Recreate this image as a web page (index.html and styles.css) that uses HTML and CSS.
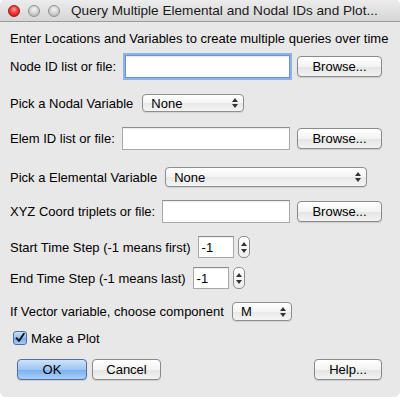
FILE: index.html
```html
<!DOCTYPE html>
<html>
<head>
<meta charset="utf-8">
<link rel="stylesheet" href="styles.css">
</head>
<body>
<div class="window">
  <div class="titlebar">
    <div class="lights">
      <span class="light red"></span>
      <span class="light gray"></span>
      <span class="light gray"></span>
    </div>
    <div class="title">Query Multiple Elemental and Nodal IDs and Plot...</div>
  </div>
  <div class="content">
    <div class="row intro">Enter Locations and Variables to create multiple queries over time</div>

    <div class="row r-node">
      <span class="label">Node ID list or file:</span>
      <span class="field focus grow"></span>
      <span class="btn browse">Browse...</span>
    </div>

    <div class="row r-nvar">
      <span class="label">Pick a Nodal Variable</span>
      <span class="select sel-nodal"><span class="sel-text">None</span><span class="arrows"><i class="up"></i><i class="down"></i></span></span>
    </div>

    <div class="row r-elem">
      <span class="label">Elem ID list or file:</span>
      <span class="field grow"></span>
      <span class="btn browse">Browse...</span>
    </div>

    <div class="row r-evar">
      <span class="label">Pick a Elemental Variable</span>
      <span class="select sel-elem"><span class="sel-text">None</span><span class="arrows"><i class="up"></i><i class="down"></i></span></span>
    </div>

    <div class="row r-xyz">
      <span class="label">XYZ Coord triplets or file:</span>
      <span class="field grow"></span>
      <span class="btn browse">Browse...</span>
    </div>

    <div class="row r-start">
      <span class="label">Start Time Step (-1 means first)</span>
      <span class="field num">-1</span>
      <span class="stepper"><i class="up"></i><i class="down"></i></span>
    </div>

    <div class="row r-end">
      <span class="label">End Time Step (-1 means last)</span>
      <span class="field num">-1</span>
      <span class="stepper"><i class="up"></i><i class="down"></i></span>
    </div>

    <div class="row r-vec">
      <span class="label">If Vector variable, choose component</span>
      <span class="select sel-vec"><span class="sel-text">M</span><span class="arrows"><i class="up"></i><i class="down"></i></span></span>
    </div>

    <div class="row r-check">
      <span class="checkbox">
        <svg width="14" height="14" viewBox="0 0 14 14"><path d="M3 7.2 L5.8 10.5 L11.5 2" fill="none" stroke="#111" stroke-width="2.2" stroke-linecap="round" stroke-linejoin="round"/></svg>
      </span>
      <span class="check-label">Make a Plot</span>
    </div>

    <div class="row r-buttons">
      <span class="btn default">OK</span>
      <span class="btn cancel">Cancel</span>
      <span class="spacer"></span>
      <span class="btn help">Help...</span>
    </div>
  </div>
</div>
</body>
</html>
```

FILE: styles.css
```css
* { box-sizing: border-box; }
html, body { margin: 0; padding: 0; background: #ffffff; }
body {
  width: 400px;
  height: 397px;
  font-family: "Liberation Sans", Arial, sans-serif;
  font-size: 13px;
  color: #000;
  overflow: hidden;
}
.window {
  width: 400px;
  height: 397px;
  background: #e8e8e8;
  border-radius: 5px 5px 6px 6px;
  overflow: hidden;
  display: flex;
  flex-direction: column;
}
.titlebar {
  height: 22px;
  flex: none;
  display: flex;
  align-items: center;
  background: linear-gradient(#ececec, #d6d6d6);
  border-bottom: 1px solid #9c9c9c;
  padding-left: 8px;
}
.lights { display: flex; gap: 8px; }
.light {
  width: 12px; height: 12px; border-radius: 50%;
  display: block;
}
.light.red {
  background: radial-gradient(circle at 50% 35%, #ff9a9a 0%, #f23a3a 45%, #b81414 100%);
  border: 1px solid #a31616;
}
.light.gray {
  background: radial-gradient(circle at 50% 35%, #f4f4f4 0%, #cfcfcf 55%, #a6a6a6 100%);
  border: 1px solid #8f8f8f;
}
.title {
  margin-left: 11px;
  font-size: 13.6px;
  color: #1a1a1a;
  white-space: nowrap;
}
.content {
  flex: 1;
  display: flex;
  flex-direction: column;
  padding: 8px 18px 0 10px;
}
.row {
  display: flex;
  align-items: center;
  white-space: nowrap;
}
.intro { height: 16px; }
.r-node { height: 25px; margin-top: 8px; }
.r-nvar { height: 18px; margin-top: 15px; }
.r-elem { height: 25px; margin-top: 14px; }
.r-evar { height: 20px; margin-top: 16px; }
.r-xyz { height: 25px; margin-top: 12px; }
.r-start { height: 22px; margin-top: 12px; }
.r-end { height: 22px; margin-top: 9px; }
.r-vec { height: 19px; margin-top: 13px; }
.r-check { height: 14px; margin-top: 10px; padding-left: 3px; }
.r-buttons { height: 22px; margin-top: 13px; padding-left: 7px; }

.label { margin-right: 7px; }
.field {
  height: 23px;
  background: #fff;
  border: 1px solid #a9a9a9;
  border-top-color: #8c8c8c;
  box-shadow: inset 0 1px 1px rgba(0,0,0,0.08);
  display: flex;
  align-items: center;
  padding-left: 3px;
}
.field.grow { flex: 1; }
.field.focus {
  border: 1px solid #6d95c9;
  box-shadow: 0 0 0 2px #8db2e3, inset 0 1px 1px rgba(0,0,0,0.1);
  margin-left: 2px;
}
.field.num { width: 36px; height: 22px; }

.btn {
  display: flex;
  align-items: center;
  justify-content: center;
  height: 21px;
  border: 1px solid #8a8a8a;
  border-radius: 4px;
  background: linear-gradient(#ffffff 0%, #f3f3f3 50%, #e4e4e4 51%, #f2f2f2 100%);
  box-shadow: 0 1px 1px rgba(0,0,0,0.12);
}
.browse { width: 85px; margin-left: 7px; }
.default {
  width: 70px;
  border-color: #4e6f9f;
  background: linear-gradient(#cfe3fb 0%, #9ec5f3 50%, #7aaeef 51%, #a9d0fa 100%);
}
.cancel { width: 69px; margin-left: 5px; }
.spacer { flex: 1; }
.help { width: 68px; }

.select {
  display: flex;
  align-items: center;
  border: 1px solid #8e8e8e;
  border-radius: 4px;
  background: linear-gradient(#ffffff 0%, #f4f4f4 50%, #e8e8e8 51%, #f5f5f5 100%);
  box-shadow: 0 1px 1px rgba(0,0,0,0.1);
  padding-left: 8px;
  padding-right: 5px;
}
.sel-text { flex: 1; }
.sel-nodal { width: 102px; height: 18px; margin-left: 2px; }
.sel-elem { width: 202px; height: 20px; margin-left: 1px; }
.sel-vec { width: 60px; height: 19px; margin-left: 1px; }
.arrows, .stepper {
  display: flex;
  flex-direction: column;
  align-items: center;
  gap: 2px;
}
.arrows i, .stepper i {
  display: block;
  width: 0; height: 0;
  border-left: 3px solid transparent;
  border-right: 3px solid transparent;
}
.arrows i.up, .stepper i.up { border-bottom: 4px solid #333; }
.arrows i.down, .stepper i.down { border-top: 4px solid #333; }
.stepper {
  width: 12px;
  height: 22px;
  margin-left: 4px;
  justify-content: center;
  border: 1px solid #8e8e8e;
  border-radius: 5px;
  background: linear-gradient(#ffffff, #ececec);
  gap: 3px;
}
.checkbox {
  width: 14px; height: 14px;
  border: 1px solid #4e6f9f;
  border-radius: 3px;
  background: linear-gradient(#c9def8 0%, #95bdf0 50%, #74a8ec 51%, #a6cdf8 100%);
  display: flex;
  align-items: center;
  justify-content: center;
}
.checkbox svg { display: block; }
.check-label { margin-left: 4px; }
```
